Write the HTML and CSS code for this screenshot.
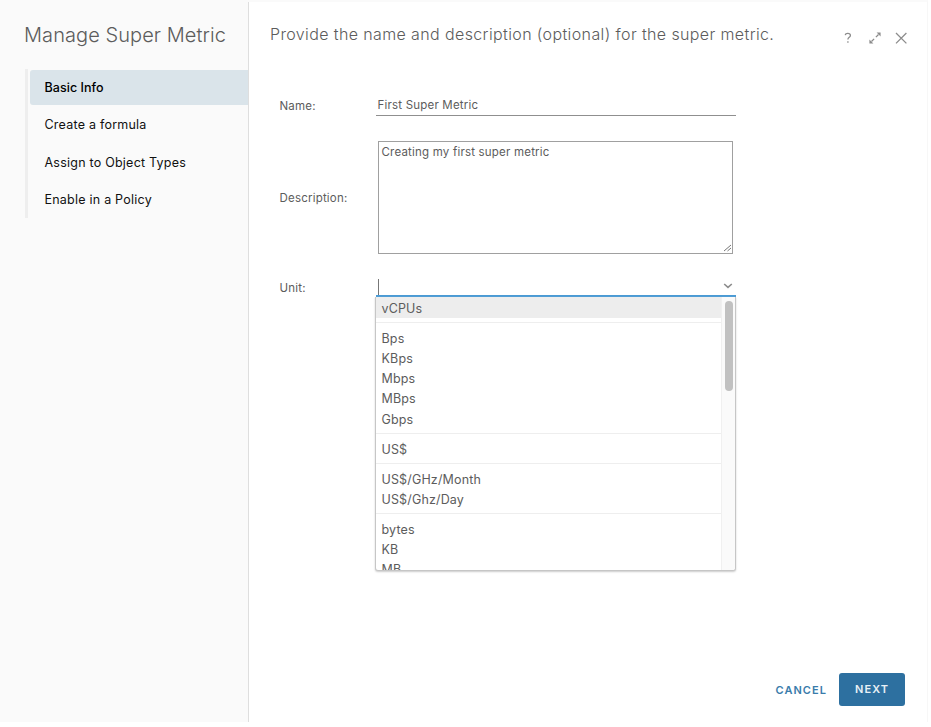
FILE: index.html
```html
<!DOCTYPE html>
<html lang="en">
<head>
<meta charset="utf-8">
<title>Manage Super Metric</title>
<link rel="stylesheet" href="styles.css">
</head>
<body>
<div class="wizard">
  <aside class="sidebar">
    <h1 class="title">Manage Super Metric</h1>
    <nav class="steps">
      <a class="step step-active">Basic Info</a>
      <a class="step">Create a formula</a>
      <a class="step">Assign to Object Types</a>
      <a class="step">Enable in a Policy</a>
    </nav>
  </aside>
  <main class="content">
    <header class="header">
      <h2 class="heading">Provide the name and description (optional) for the super metric.</h2>
      <div class="actions">
        <svg class="help" width="10" height="14" viewBox="0 0 10 14"><path d="M2.2 4.1C2.4 2.9 3.4 2.3 4.7 2.3c1.6 0 2.7.8 2.7 2.1 0 1.9-2.5 1.9-2.5 4.1M4.9 10.2v1.6"/></svg>
        <svg class="expand" width="14" height="14" viewBox="0 0 14 14"><path d="M7.9 6.1L10.5 3.5M6.1 7.9L3.5 10.5"/><path class="head" d="M8.6 1.4h4v4zM5.4 12.6h-4v-4z"/></svg>
        <svg width="14" height="14" viewBox="0 0 14 14"><path d="M2 2l10.4 10.4M12.4 2L2 12.4"/></svg>
      </div>
    </header>
    <form class="form">
      <label class="label">Name:</label>
      <div class="name-input">First Super Metric</div>
      <label class="label">Description:</label>
      <div class="textarea">Creating my first super metric
        <svg class="grip" width="9" height="9" viewBox="0 0 9 9"><path d="M1 8L8 2M4.5 8L8 5"/></svg>
      </div>
      <label class="label">Unit:</label>
      <div class="combo">
        <span class="caret"></span>
        <svg class="chevron" width="10" height="8" viewBox="0 0 10 8"><path d="M1.2 2L5 5.4 8.8 2"/></svg>
        <div class="menu">
          <div class="options">
            <div class="group"><div class="option option-active">vCPUs</div></div>
            <div class="group">
              <div class="option">Bps</div>
              <div class="option">KBps</div>
              <div class="option">Mbps</div>
              <div class="option">MBps</div>
              <div class="option">Gbps</div>
            </div>
            <div class="group"><div class="option">US$</div></div>
            <div class="group">
              <div class="option">US$/GHz/Month</div>
              <div class="option">US$/Ghz/Day</div>
            </div>
            <div class="group">
              <div class="option">bytes</div>
              <div class="option">KB</div>
              <div class="option">MB</div>
            </div>
          </div>
          <div class="track"><div class="thumb"></div></div>
        </div>
      </div>
    </form>
    <footer class="footer">
      <span class="cancel">CANCEL</span>
      <span class="next">NEXT</span>
    </footer>
  </main>
</div>
</body>
</html>
```
FILE: styles.css
```css
* { box-sizing: border-box; }
body {
  margin: 0;
  background: #fff;
  font-family: Inter, "Liberation Sans", sans-serif;
  color: #5c5c5c;
  overflow: hidden;
}
.wizard {
  display: flex;
  width: 928px;
  height: 722px;
  border-top: 2px solid #fafafa;
  border-right: 1px solid #f7f7f7;
}
.sidebar {
  width: 249px;
  background: #fafafa;
  border-right: 1px solid #dedede;
  padding-top: 19px;
}
.title {
  margin: 0 0 20px 24px;
  font-size: 20px;
  font-weight: 300;
  line-height: 28px;
  letter-spacing: 0.07px;
  white-space: nowrap;
}
.steps {
  display: flex;
  flex-direction: column;
  gap: 2.4px;
  height: 149px;
  margin-left: 25px;
  padding: 1px 0 0 2px;
  border-left: 3px solid #eee;
}
.step {
  height: 35px;
  padding-left: 14.5px;
  border-radius: 3px 0 0 3px;
  font-size: 12.5px;
  line-height: 35.6px;
  letter-spacing: 0.23px;
  color: #111;
  white-space: nowrap;
}
.step-active {
  background: #dae4ea;
  font-weight: 500;
  letter-spacing: 0.05px;
  color: #000;
}
.content {
  flex: 1;
  display: flex;
  flex-direction: column;
}
.header {
  display: flex;
  justify-content: space-between;
  padding: 19px 19px 0 21px;
}
.heading {
  margin: 0;
  font-size: 16px;
  font-weight: 300;
  line-height: 27px;
  letter-spacing: 0.38px;
  white-space: nowrap;
}
.actions {
  display: flex;
  align-items: center;
  gap: 12px;
  padding-top: 6px;
}
.help { margin-right: 3px; }
svg {
  display: block;
  fill: none;
  stroke: #8c8c8c;
  stroke-width: 1.3;
}
.head { fill: #8c8c8c; stroke: none; }
.form {
  display: grid;
  grid-template-columns: 96px 360px;
  grid-template-rows: 21px 113px 18px;
  row-gap: 25px;
  align-items: center;
  margin: 47px 0 0 30.5px;
  font-size: 11.5px;
  letter-spacing: 0.2px;
}
.label { white-space: nowrap; }
.name-input {
  height: 21px;
  padding-left: 2px;
  line-height: 21px;
  border-bottom: 1px solid #8f8f8f;
}
.textarea {
  position: relative;
  width: 355px;
  height: 113px;
  margin-left: 2px;
  padding: 2px 3px;
  line-height: 16px;
  border: 1px solid #a0a0a0;
}
.grip {
  position: absolute;
  right: 0;
  bottom: 1px;
  stroke: #777;
  stroke-width: 1;
}
.combo {
  position: relative;
  display: flex;
  align-items: center;
  justify-content: space-between;
  height: 18px;
  padding: 0 3px 0 2px;
  border-bottom: 2px solid #4a9ad4;
}
.caret { width: 1px; height: 16px; background: #777; }
.chevron { margin-bottom: 2px; stroke-width: 1.6; }
.menu {
  position: absolute;
  top: 18px;
  left: -1px;
  display: flex;
  width: 361px;
  height: 274px;
  overflow: hidden;
  border: 1px solid #c6c6c6;
  border-top: 0;
  border-radius: 0 0 3px 3px;
  background: #fff;
  box-shadow: 0 1px 2px #ccc;
}
.options { flex: 1; font-size: 12.5px; letter-spacing: 0.15px; }
.group + .group { margin-top: 4px; padding-top: 5px; border-top: 1px solid #eee; }
.option { height: 20.15px; padding-left: 6px; line-height: 22px; }
.option-active { height: 21px; line-height: 23px; background: #ededed; }
.track {
  width: 14px;
  padding: 4px 0 0 3px;
  background: #fafafa;
  border-left: 1px solid #f0f0f0;
}
.thumb { width: 8px; height: 90px; border-radius: 4px; background: #c1c1c1; }
.footer {
  display: flex;
  align-items: center;
  justify-content: flex-end;
  gap: 12px;
  margin-top: auto;
  padding: 0 22px 16px 0;
  font-size: 11px;
  font-weight: 600;
  letter-spacing: 1.05px;
}
.cancel { color: #3a7cab; }
.next {
  width: 66px;
  height: 33px;
  border-radius: 3px;
  background: #2d70a0;
  color: #e8f0f6;
  line-height: 33px;
  text-align: center;
}
```
